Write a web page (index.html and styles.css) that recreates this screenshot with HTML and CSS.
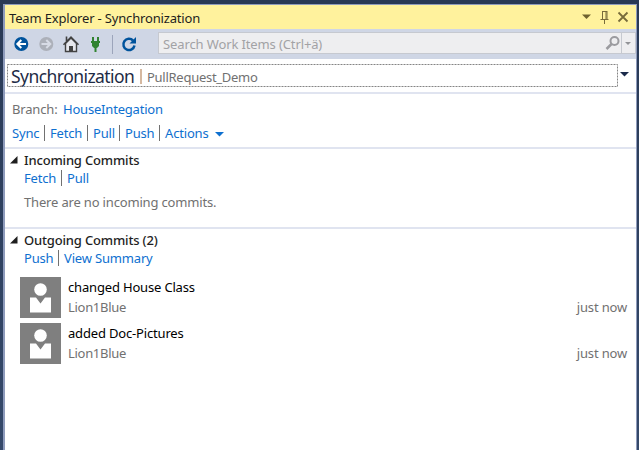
FILE: index.html
```html
<!DOCTYPE html>
<html lang="en">
<head>
<meta charset="utf-8">
<title>Team Explorer - Synchronization</title>
<link rel="stylesheet" href="styles.css">
</head>
<body>
<main class="panel">
  <header class="titlebar">
    <span class="caption">Team Explorer - Synchronization</span>
    <svg class="window-icons" width="50" height="16" viewBox="0 0 50 16">
      <path d="M2 5.500h9L6.500 10z" fill="#6f622f"/>
      <path d="M22.500 2v8M22 2.500h5M26 2v8M27 2v8M20.500 10.500h8M24.500 11v4" fill="none" stroke="#776b3b"/>
      <path d="M38.500 3.500l9 9M47.500 3.500l-9 9" stroke="#776b3b" stroke-width="1.800"/>
    </svg>
  </header>
  <nav class="toolbar">
    <svg class="tools" width="145" height="28" viewBox="0 0 145 28">
      <circle cx="17.300" cy="14" r="7" fill="#00539c"/>
      <path d="M22 14h-8M17.300 10l-4 4 4 4" fill="none" stroke="#fff" stroke-width="2"/>
      <circle cx="42.300" cy="14" r="7" fill="#acb0b9"/>
      <path d="M37.500 14h8M42.300 10l4 4-4 4" fill="none" stroke="#d7dbe5" stroke-width="2"/>
      <path d="M61.500 13.500v8h11v-8L67 8z" fill="#e6e7ed" stroke="#424242" stroke-width="1.400"/>
      <path d="M59.500 14.800L67 7.200l7.500 7.600M62.500 11V6.500" fill="none" stroke="#424242" stroke-width="1.600"/>
      <path d="M65 16h4v6h-4z" fill="#424242"/>
      <path d="M88 7h2v4h3V7h2v4h1v2h-1v3l-2 2h-.5v4h-2v-4H90l-2-2v-3h-1v-2h1z" fill="#318331"/>
      <path d="M108.500 5v19" stroke="#9ca5bb"/>
      <path d="M129 10.500a5.600 5.600 0 1 0 1.500 5" fill="none" stroke="#00539c" stroke-width="2.500"/>
      <path d="M132 7v6.500h-6.500z" fill="#00539c"/>
    </svg>
    <div class="search">
      <span class="placeholder">Search Work Items (Ctrl+ä)</span>
      <svg class="search-icons" width="32" height="20" viewBox="0 0 32 20">
        <circle cx="11.500" cy="8" r="4" fill="none" stroke="#9b9b9f" stroke-width="2"/>
        <path d="M8.500 11l-5 5" stroke="#9b9b9f" stroke-width="2.500"/>
        <path d="M18.500 0v20" stroke="#c6c9d0"/>
        <path d="M22 9h6l-3 3z" fill="#929397"/>
      </svg>
    </div>
  </nav>
  <section class="page-head">
    <div class="focus">
      <svg class="dots" width="611" height="23"><rect x=".5" y=".5" width="610" height="22" fill="none" stroke="#858585" stroke-dasharray="2 1"/></svg>
      <h1>Synchronization</h1><i class="divider"></i><span class="repo">PullRequest_Demo</span>
    </div>
    <svg class="head-arrow" width="9" height="5"><path d="M0 0h9L4.500 4.500z" fill="#1b2a4a"/></svg>
  </section>
  <section class="branch">
    <div class="row branch-row"><span class="label">Branch:</span><a class="branch-name">HouseIntegation</a></div>
    <div class="row links"><a class="sync">Sync</a><a class="fetch">Fetch</a><a class="pull">Pull</a><a class="push">Push</a><a class="actions">Actions</a><svg width="9" height="5"><path d="M0 0h9L4.500 4.500z" fill="#0e70d0"/></svg></div>
  </section>
  <section class="group incoming">
    <h2><svg width="8" height="8"><path d="M7.500 0v7.500H0z" fill="#1e1e1e"/></svg><span class="incoming-title">Incoming Commits</span></h2>
    <div class="row links sub"><a class="fetch">Fetch</a><a class="pull">Pull</a></div>
    <p>There are no incoming commits.</p>
  </section>
  <section class="group outgoing">
    <h2><svg width="8" height="8"><path d="M7.500 0v7.500H0z" fill="#1e1e1e"/></svg><span class="outgoing-title">Outgoing Commits (2)</span></h2>
    <div class="row links sub"><a class="push">Push</a><a class="summary">View Summary</a></div>
    <article class="commit">
      <svg class="avatar" width="41" height="41"><path d="M0 0h41v41H0z" fill="#7f7f7f"/><circle cx="20.500" cy="12.500" r="6.300" fill="#fff"/><path d="M10 20.500h6l4.500 6 4.500-6h6v15H10z" fill="#fff"/></svg>
      <div class="details"><span class="message first">changed House Class</span><span class="author">Lion1Blue</span></div><time>just now</time>
    </article>
    <article class="commit">
      <svg class="avatar" width="41" height="41"><path d="M0 0h41v41H0z" fill="#7f7f7f"/><circle cx="20.500" cy="12.500" r="6.300" fill="#fff"/><path d="M10 20.500h6l4.500 6 4.500-6h6v15H10z" fill="#fff"/></svg>
      <div class="details"><span class="message second">added Doc-Pictures</span><span class="author">Lion1Blue</span></div><time>just now</time>
    </article>
  </section>
</main>
</body>
</html>
```
FILE: styles.css
```css
* { box-sizing: border-box; }
body {
  margin: 0;
  height: 450px;
  padding: 4px 2px 0 3px;
  overflow: hidden;
  background: linear-gradient(#293955, #35496a);
  font: 13px/18px "Noto Sans", "Open Sans", sans-serif;
  letter-spacing: -.17px;
  color: #1e1e1e;
  white-space: nowrap;
}
svg { display: block; flex: none; }
a { color: #0e70d0; }
h1, h2, p { margin: 0; }
.panel { height: 446px; background: #fff; border: solid #8e9bbc; border-width: 1px 1px 0 2px; }
.titlebar { height: 24px; display: flex; justify-content: space-between; background: #fff29d; padding: 4px 6px 0 4px; }
.caption { letter-spacing: -.17px; }
.toolbar { height: 30px; background: #cfd6e5; display: flex; }
.tools { margin: 1px 0 0 -1px; }
.search { width: 478px; height: 22px; margin: 3px 0 0 9px; border: 1px solid #c6c9d0; background: #eeeef0; display: flex; justify-content: space-between; padding-left: 4px; }
.placeholder { color: #a2a2a5; line-height: 22px; letter-spacing: -.12px; }
.page-head { height: 35px; border-bottom: 2px solid #e0e4f0; display: flex; padding: 5px 0 0 2px; }
.focus { position: relative; width: 611px; height: 23px; display: flex; padding-left: 4px; }
.dots { position: absolute; left: 0; top: 0; }
h1 { font-size: 17.5px; font-weight: 400; line-height: 24px; width: 129px; color: #1e2b45; letter-spacing: -.55px; }
.divider { width: 2px; height: 15px; margin-top: 5px; background: #d5b8a0; }
.repo { color: #717171; line-height: 26px; margin-left: 5px; letter-spacing: -.27px; }
.head-arrow { margin: 8px 0 0 2px; }
.branch { height: 55px; border-bottom: 2px solid #e0e4f0; padding: 6px 0 0 7px; }
.row { display: flex; height: 18px; }
.label { width: 51px; color: #717171; }
.branch-name { letter-spacing: -.2px; }
.links { align-items: center; }
.branch .links { margin-top: 6px; }
.links a + a { border-left: 1px solid #717171; padding-left: 5px; height: 16px; line-height: 16px; }
.sync { width: 32px; }
.fetch { width: 37px; }
.links a.fetch + a.pull { width: 32px; }
.sync + .fetch { width: 43px; }
.links .pull + .push { width: 40px; }
.actions { width: 50px; }
.links svg { margin-left: 6px; margin-top: 2px; }
.links.sub { padding-left: 19px; }
.sub > .push { width: 34px; }
.group { height: 80px; border-bottom: 2px solid #e0e4f0; padding-top: 2px; }
h2 { display: flex; align-items: center; font-size: 13px; line-height: 18px; font-weight: 500; padding-left: 5px; gap: 6px; }
p { color: #717171; margin: 6px 0 0 19px; }
.outgoing { border: 0; height: auto; }
.commit { display: flex; height: 46px; padding: 0 9px 0 15px; }
.sub + .commit { margin-top: 10px; }
.details { margin-left: 7px; flex: 1; display: flex; flex-direction: column; }
.message { line-height: 20px; color: #000; }
.author { line-height: 21px; color: #717171; letter-spacing: -.3px; }
time { margin-top: 20px; line-height: 21px; color: #717171; }
```
